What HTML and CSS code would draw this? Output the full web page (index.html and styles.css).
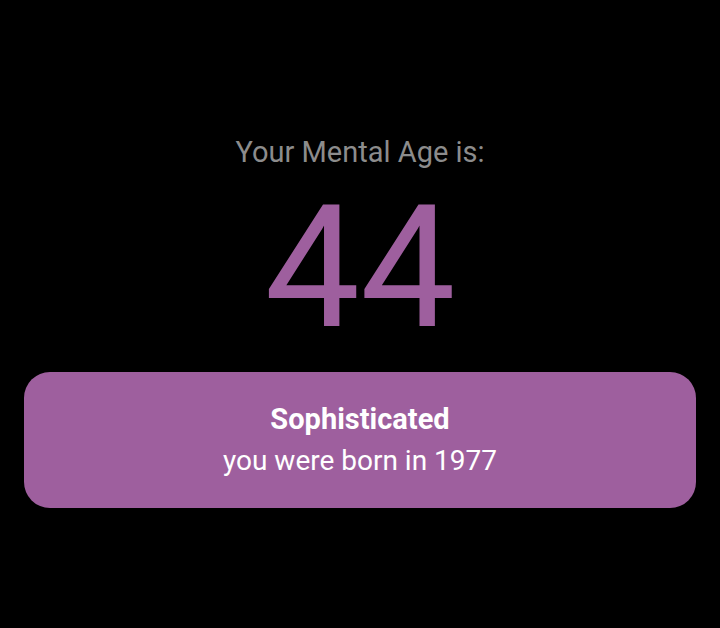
FILE: index.html
```html
<!DOCTYPE html>
<html>
<head>
    <title>Mental Age</title>
    <meta name="viewport" content="width=device-width, initial-scale=1.0">
    <link rel="stylesheet" href="styles.css">
</head>
<body>
    <div class="result">
        <p class="result-label">Your Mental Age is:</p>
        <div class="result-age">44</div>

        <div class="result-card">
            <div class="card-title">Sophisticated</div>
            <div class="card-text">you were born in 1977</div>
        </div>
    </div>
</body>
</html>
```

FILE: styles.css
```css
/* base */
body {
    background: #000;
    font-family: Roboto, 'Noto Sans', sans-serif;
    margin: 0;
    min-height: 100vh;
}

.result {
    padding: 132px 24px 0;
    text-align: center;
}

.result-label {
    color: #8c8c8c;
    font-size: 29px;
    margin: 0;
    line-height: 40px;
}

.result-age {
    color: #9e5f9e;
    font-size: 170px;
    line-height: 200px;
    margin-top: -4px;
}

/* card */
.result-card {
    background: #9e5f9e;
    border-radius: 26px;
    height: 136px;
    margin-top: 4px;
    display: flex;
    flex-direction: column;
    justify-content: center;
    color: #fff;
}

.card-title {
    font-weight: bold;
    font-size: 29px;
    line-height: 42px;
}

.card-text {
    font-size: 28px;
    line-height: 42px;
}
```
